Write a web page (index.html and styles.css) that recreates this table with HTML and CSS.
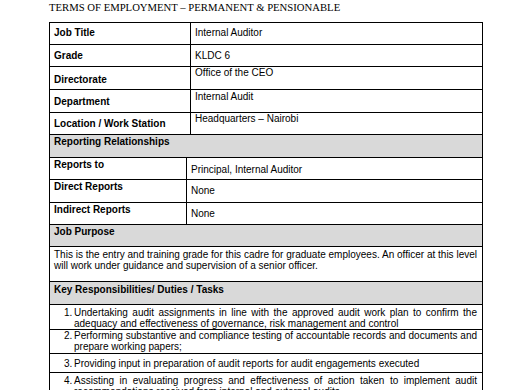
FILE: index.html
```html
<!DOCTYPE html>
<html lang="en">
<head>
    <meta charset="UTF-8">
    <title>Internal Auditor - Job Description</title>
    <link rel="stylesheet" href="styles.css">
</head>
<body>
    <div class="page">
        <div class="terms">TERMS OF EMPLOYMENT – PERMANENT &amp; PENSIONABLE</div>

        <table class="jd">
            <colgroup>
                <col class="c-label">
                <col class="c-gap">
                <col>
            </colgroup>
            <tr class="r22">
                <td colspan="2" class="lbl pt4">Job Title</td>
                <td class="pt4">Internal Auditor</td>
            </tr>
            <tr class="r22">
                <td colspan="2" class="lbl pt5">Grade</td>
                <td class="pt5">KLDC 6</td>
            </tr>
            <tr class="r23">
                <td colspan="2" class="lbl pt7">Directorate</td>
                <td class="pt0">Office of the CEO</td>
            </tr>
            <tr class="r23">
                <td colspan="2" class="lbl pt6">Department</td>
                <td class="pt1">Internal Audit</td>
            </tr>
            <tr class="r22">
                <td colspan="2" class="lbl pt5">Location / Work Station</td>
                <td class="pt0">Headquarters – Nairobi</td>
            </tr>
            <tr class="r23 head">
                <td colspan="3" class="lbl pt1">Reporting Relationships</td>
            </tr>
            <tr class="r22">
                <td class="lbl pt1">Reports to</td>
                <td colspan="2" class="pt6">Principal, Internal Auditor</td>
            </tr>
            <tr class="r23">
                <td class="lbl pt1">Direct Reports</td>
                <td colspan="2" class="pt5">None</td>
            </tr>
            <tr class="r22">
                <td class="lbl pt1">Indirect Reports</td>
                <td colspan="2" class="pt5">None</td>
            </tr>
            <tr class="r22 head">
                <td colspan="3" class="lbl pt1">Job Purpose</td>
            </tr>
            <tr class="r35">
                <td colspan="3" class="para">This is the entry and training grade for this cadre for graduate employees. An officer at this level will work under guidance and supervision of a senior officer.</td>
            </tr>
            <tr class="r23 head">
                <td colspan="3" class="lbl pt2">Key Responsibilities/ Duties / Tasks</td>
            </tr>
            <tr class="r23">
                <td colspan="3" class="item pt2"><span class="num">1.</span><span class="txt">Undertaking audit assignments in line with the approved audit work plan to confirm the adequacy and effectiveness of governance, risk management and control</span></td>
            </tr>
            <tr class="r24">
                <td colspan="3" class="item pt0"><span class="num">2.</span><span class="txt">Performing substantive and compliance testing of accountable records and documents and prepare working papers;</span></td>
            </tr>
            <tr class="r19">
                <td colspan="3" class="item pt4"><span class="num">3.</span><span class="txt">Providing input in preparation of audit reports for audit engagements executed</span></td>
            </tr>
            <tr class="r24">
                <td colspan="3" class="item pt2"><span class="num">4.</span><span class="txt">Assisting in evaluating progress and effectiveness of action taken to implement audit recommendations received from internal and external audits</span></td>
            </tr>
        </table>
    </div>
</body>
</html>
```

FILE: styles.css
```css
body {
    margin: 0;
    background: #fff;
    color: #000;
    font-family: "Liberation Sans", Arial, sans-serif;
}
.page {
    padding: 1px 0 0 49px;
    width: 434px;
}
.terms {
    font-family: "Liberation Serif", "Times New Roman", serif;
    font-size: 10.7px;
    line-height: 13px;
    height: 21px;
}
.jd {
    width: 434px;
    border-collapse: collapse;
    table-layout: fixed;
    font-size: 10px;
    line-height: 11px;
}
.c-label { width: 137px; }
.c-gap { width: 4px; }
.jd td {
    border: 1px solid #000;
    padding: 0 4px;
    vertical-align: top;
}
.lbl { font-weight: bold; }
.head td { background: #d9d9d9; }

.r19 { height: 19px; }
.r22 { height: 22px; }
.r23 { height: 23px; }
.r24 { height: 24px; }
.r35 { height: 35px; }

.jd td.pt0 { padding-top: 0; }
.jd td.pt1 { padding-top: 1px; }
.jd td.pt2 { padding-top: 2px; }
.jd td.pt4 { padding-top: 4px; }
.jd td.pt5 { padding-top: 5px; }
.jd td.pt6 { padding-top: 6px; }
.jd td.pt7 { padding-top: 7px; }

.jd td.para {
    padding: 2px 5px 0 4px;
    text-align: justify;
}
.jd td.item {
    padding-left: 14px;
    padding-right: 5px;
}
.num {
    float: left;
    width: 10px;
}
.txt {
    display: block;
    margin-left: 10px;
    text-align: justify;
}
```
